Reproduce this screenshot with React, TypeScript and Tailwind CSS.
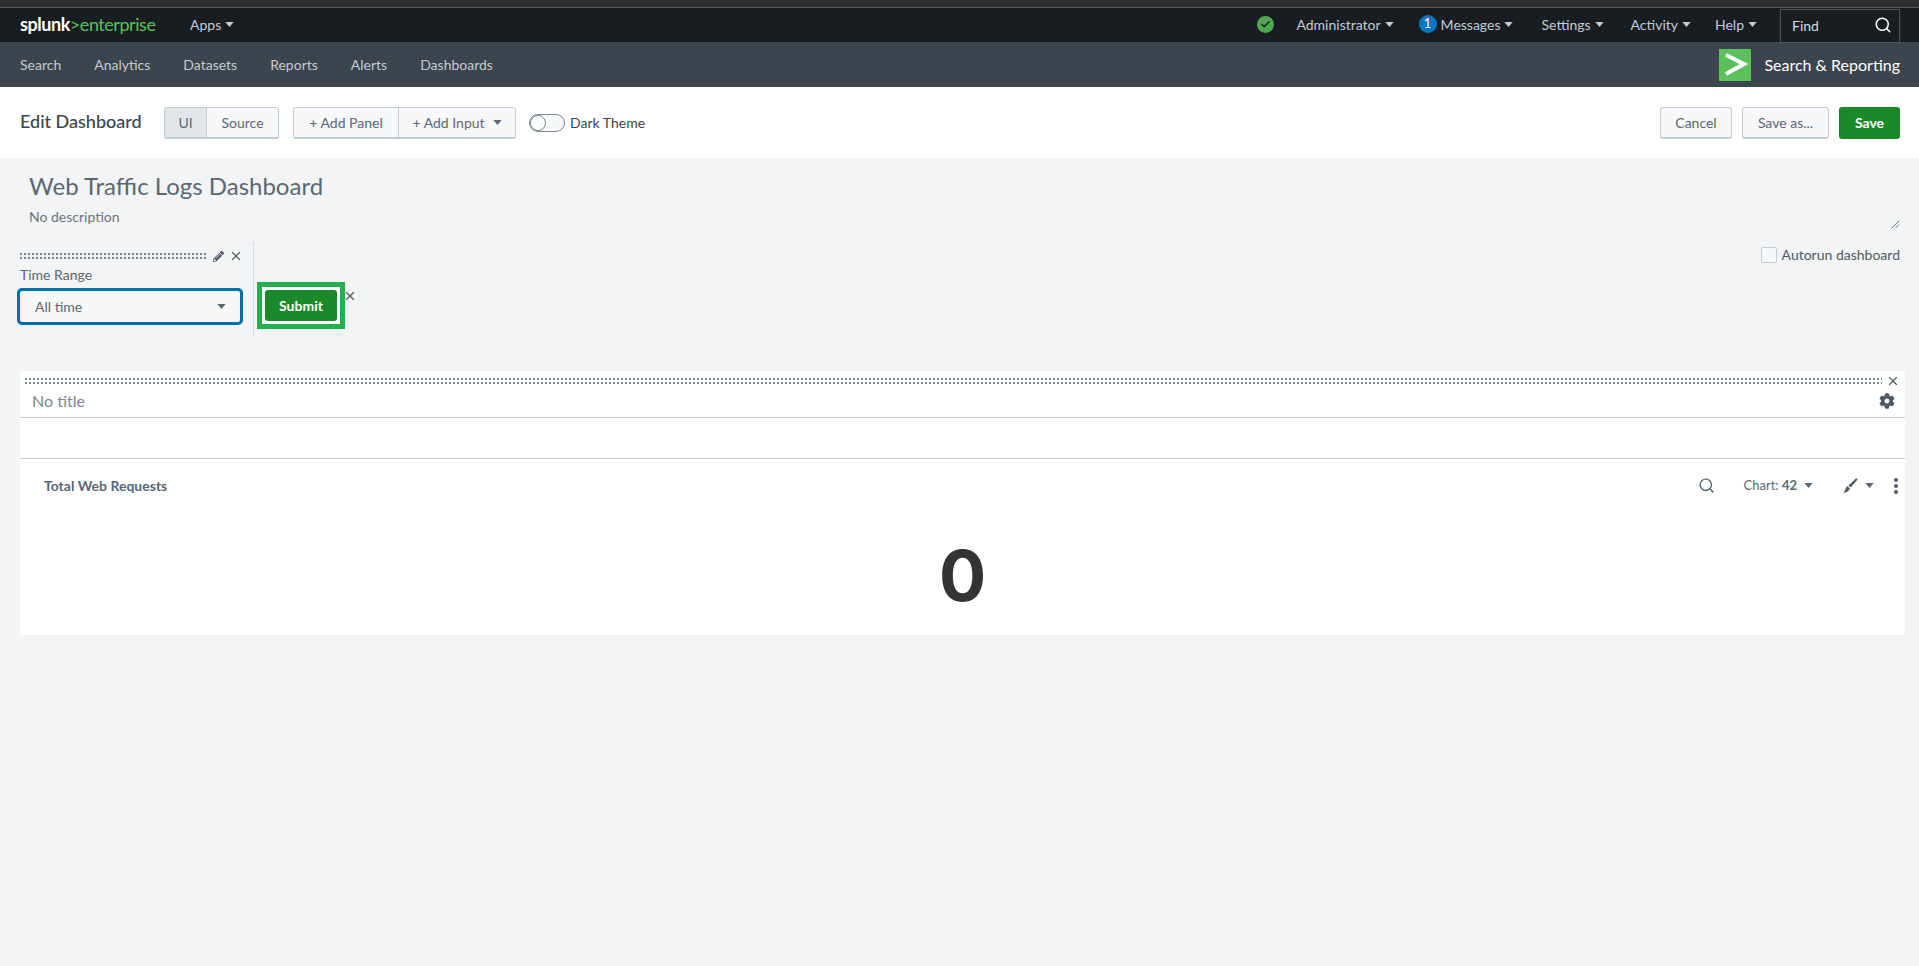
import { Check, Search, X } from 'lucide-react';
import { FaCog, FaPencilAlt } from 'react-icons/fa';

function Caret({ className = '' }: { className?: string }) {
  return (
    <svg viewBox="0 0 10 6" className={`w-[9px] h-[5px] ${className}`} fill="currentColor">
      <path d="M0 0h10L5 6z" />
    </svg>
  );
}

function NavMenu({ label, className = '' }: { label: string; className?: string }) {
  return (
    <div className={`flex items-center gap-[4px] text-[14px] text-[#c3cbd4] ${className}`}>
      <span>{label}</span>
      <Caret />
    </div>
  );
}

function DragDots({ className = '' }: { className?: string }) {
  return (
    <div className={`flex flex-col gap-[2px] ${className}`}>
      <div className="h-[2px] bg-[repeating-linear-gradient(90deg,#7d8791_0_2px,transparent_2px_4px)]" />
      <div className="h-[2px] bg-[repeating-linear-gradient(90deg,#7d8791_0_2px,transparent_2px_4px)]" />
    </div>
  );
}

const appLinks = ['Search', 'Analytics', 'Datasets', 'Reports', 'Alerts', 'Dashboards'];

export default function App() {
  return (
    <div className="min-h-screen bg-[#f2f4f5] font-[Lato,sans-serif] text-[#5c6773]">
      <div className="h-2 bg-[#2e2e2e] border-b border-[#5a5a5a]" />

      <div className="h-[34px] bg-[#171d21] flex items-center pl-5 pr-[19px] pb-[2px]">
        <div className="w-[136px] text-[18px] leading-none tracking-[-0.45px] whitespace-nowrap">
          <span className="font-bold text-white">splunk</span>
          <span className="text-[#5cc05c]">&gt;enterprise</span>
        </div>
        <NavMenu label="Apps" className="ml-[34px]" />
        <div className="ml-auto flex items-center">
          <div className="w-[17px] h-[17px] rounded-full bg-[#4fa84f] flex items-center justify-center">
            <Check className="w-[11px] h-[11px] text-[#171d21]" strokeWidth={3} />
          </div>
          <NavMenu label="Administrator" className="ml-[22px]" />
          <div className="ml-[25px] w-[18px] h-[18px] rounded-full bg-[#0877c1] text-white text-[13px] flex items-center justify-center">
            1
          </div>
          <NavMenu label="Messages" className="ml-[4px]" />
          <NavMenu label="Settings" className="ml-[28px]" />
          <NavMenu label="Activity" className="ml-[27px]" />
          <NavMenu label="Help" className="ml-[24px]" />
          <div className="ml-[23px] w-[120px] h-[34px] mt-[4px] border border-[#4d555e] flex items-center justify-between pl-[11px] pr-[7px] pb-[2px] text-[14px] text-[#d5dbe1]">
            <span>Find</span>
            <Search className="w-[18px] h-[18px] text-white" strokeWidth={2} />
          </div>
        </div>
      </div>

      <div className="h-[45px] bg-[#3c444d] flex items-center pl-5 pr-[19px]">
        <div className="flex items-center gap-[33px] text-[14px] text-[#c3cbd4]">
          {appLinks.map((link) => (
            <span key={link}>{link}</span>
          ))}
        </div>
        <div className="ml-auto flex items-center">
          <div className="w-[32px] h-[32px] bg-[#5cc05c] flex items-center justify-center">
            <svg viewBox="0 0 32 32" className="w-[32px] h-[32px]" fill="none">
              <path d="M7 6 L25 15 L7 25" stroke="#fff" strokeWidth="4" />
            </svg>
          </div>
          <span className="ml-[13px] text-[16px] text-white whitespace-nowrap">Search &amp; Reporting</span>
        </div>
      </div>

      <div className="h-[71px] bg-white flex items-center pl-5 pr-[19px]">
        <span className="text-[18px] font-medium text-[#3c444d] w-[144px] whitespace-nowrap mb-[2px]">Edit Dashboard</span>
        <div className="flex h-[32px] text-[14px] rounded-[3px] border border-[#c3cbd4] border-b-2 overflow-hidden">
          <div className="w-[42px] bg-[#e1e6eb] flex items-center justify-center border-r border-[#c3cbd4]">UI</div>
          <div className="w-[71px] bg-[#f7f8fa] flex items-center justify-center">Source</div>
        </div>
        <div className="ml-[14px] flex h-[32px] text-[14px] rounded-[3px] border border-[#c3cbd4] border-b-2 overflow-hidden">
          <div className="w-[105px] bg-[#f7f8fa] flex items-center justify-center border-r border-[#c3cbd4]">+ Add Panel</div>
          <div className="w-[116px] bg-[#f7f8fa] flex items-center justify-center gap-[8px]">
            + Add Input
            <Caret />
          </div>
        </div>
        <div className="ml-[13px] w-[36px] h-[18px] rounded-full border border-[#7d8791] bg-[#f7f8fa] flex items-center">
          <div className="w-[16px] h-[16px] rounded-full bg-white border border-[#7d8791]" />
        </div>
        <span className="ml-[5px] text-[14px] text-[#3c444d]">Dark Theme</span>
        <div className="ml-auto flex items-center text-[14px]">
          <div className="w-[72px] h-[32px] bg-[#f7f8fa] rounded-[3px] border border-[#c3cbd4] border-b-2 flex items-center justify-center">
            Cancel
          </div>
          <div className="ml-[10px] w-[87px] h-[32px] bg-[#f7f8fa] rounded-[3px] border border-[#c3cbd4] border-b-2 flex items-center justify-center">
            Save as...
          </div>
          <div className="ml-[10px] w-[61px] h-[32px] bg-[#1a8929] rounded-[3px] flex items-center justify-center text-white font-bold">
            Save
          </div>
        </div>
      </div>

      <div className="pl-5 pr-[14px]">
        <div className="pl-[9px] pr-[5px] pt-[13px] relative">
          <div className="text-[24px] leading-[30px] text-[#5c6773]">Web Traffic Logs Dashboard</div>
          <div className="mt-[6px] text-[14px] leading-[20px] text-[#6b7580]">No description</div>
          <svg viewBox="0 0 10 10" className="absolute right-[5px] top-[62px] w-[9px] h-[9px]" stroke="#5c6773" fill="none">
            <path d="M1 9L9 1M5 9L9 5" />
          </svg>
        </div>

        <div className="mt-[15px] flex items-start h-[129px]">
          <div className="w-[234px] h-[93px] border-r border-dotted border-[#b5bcc4] pt-[9px]">
            <div className="flex items-center w-[224px] h-[10px]">
              <DragDots className="w-[186px]" />
              <FaPencilAlt className="ml-[7px] w-[11px] h-[11px] text-[#4f5a65]" />
              <X className="ml-[5px] w-[14px] h-[14px] text-[#4f5a65]" strokeWidth={2} />
            </div>
            <div className="mt-[5px] text-[14px] leading-[17px] text-[#5c6773]">Time Range</div>
            <div className="-ml-[3px] mt-[5px] w-[226px] h-[37px] rounded-[5px] border-[3px] border-[#006eaa] bg-[#f7f8fa] flex items-center justify-between pl-[15px] pr-[14px] text-[14px]">
              <span>All time</span>
              <Caret />
            </div>
          </div>
          <div className="ml-[3px] mt-[40px] w-[88px] h-[47px] border-[5px] border-[#25ae4e] bg-white p-[3px]">
            <div className="h-full rounded-[3px] bg-[#1a8929] flex items-center justify-center text-[14px] font-bold text-white">
              Submit
            </div>
          </div>
          <X className="mt-[47px] -ml-[2px] w-[14px] h-[14px] text-[#4f5a65]" strokeWidth={2} />
          <div className="ml-auto mr-[5px] mt-[2px] flex items-center gap-[5px] text-[14px] text-[#4f5a65]">
            <div className="w-[16px] h-[16px] rounded-[2px] border border-[#c3cbd4] bg-[#f7f8fa]" />
            <span>Autorun dashboard</span>
          </div>
        </div>

        <div className="bg-white h-[264px] flex flex-col">
          <div className="pl-[5px] pr-[5px] pt-[5px] flex items-center h-[14px]">
            <DragDots className="flex-1" />
            <X className="ml-[4px] w-[14px] h-[14px] text-[#4f5a65]" strokeWidth={2} />
          </div>
          <div className="h-[33px] border-b border-[#c3cbd4] flex items-center justify-between pl-3 pr-[10px] text-[16px] text-[#7d8791]">
            <span>No title</span>
            <FaCog className="w-[16px] h-[16px] text-[#4f5a65]" />
          </div>
          <div className="h-[41px] border-b border-[#c3cbd4]" />
          <div className="h-[53px] flex items-center pl-6 text-[14px]">
            <span className="font-bold text-[#5c6773]">Total Web Requests</span>
            <div className="ml-auto flex items-center">
              <Search className="w-[17px] h-[17px]" strokeWidth={2} />
              <span className="ml-[29px] text-[13px]">Chart: <b className="font-bold">42</b></span>
              <Caret className="ml-[7px]" />
              <svg viewBox="0 0 15 15" className="ml-[30px] w-[15px] h-[15px] text-[#4f5a65]" fill="currentColor">
                <path d="M13.2 0.3 L14.7 1.6 L7.6 9.6 L5.4 7.5 Z" />
                <path d="M4.6 8.3 L6.9 10.4 C6.2 12.8 3.4 14.6 0.3 14.7 C2 13.4 2.2 11.4 2.9 9.9 C3.3 9.1 3.9 8.6 4.6 8.3 Z" />
              </svg>
              <Caret className="ml-[7px]" />
              <div className="ml-[20px] mr-[7px] flex flex-col gap-[2px]">
                <div className="w-[4px] h-[4px] rounded-full bg-[#4f5a65]" />
                <div className="w-[4px] h-[4px] rounded-full bg-[#4f5a65]" />
                <div className="w-[4px] h-[4px] rounded-full bg-[#4f5a65]" />
              </div>
            </div>
          </div>
          <div className="flex justify-center text-[70px] leading-[70px] font-bold font-[Inter,sans-serif] text-[#333333] mt-[29px]">
            0
          </div>
        </div>
      </div>
    </div>
  );
}
